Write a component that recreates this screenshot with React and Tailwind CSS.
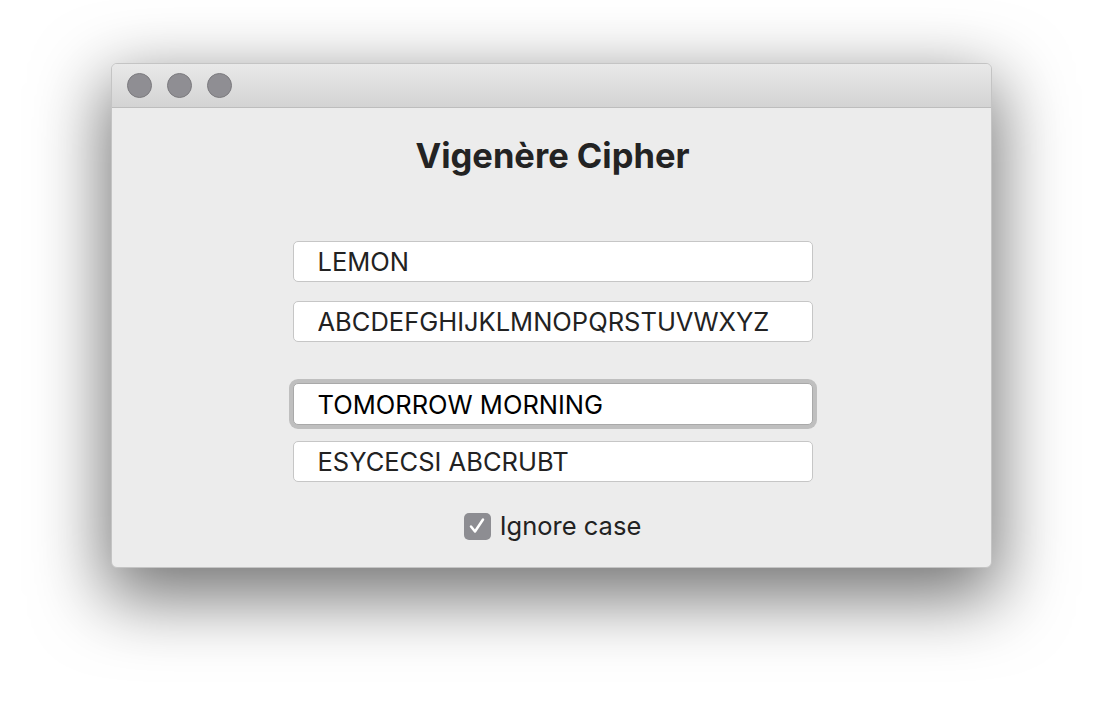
import { useState } from 'react';

const font = { fontFamily: 'Inter, "Liberation Sans", sans-serif' };

function Field({ value, onChange, focused }) {
  return (
    <input
      value={value}
      onChange={onChange}
      className={
        'w-[520px] bg-white rounded-[5px] px-[24px] text-[25.5px] outline-none ' +
        (focused
          ? 'h-[42px] border border-[#a9a9a9] text-black shadow-[0_0_0_4px_#bfbfbf]'
          : 'h-[41px] border border-[#c6c6c6] text-[#222]')
      }
      style={font}
    />
  );
}

export default function App() {
  const [key, setKey] = useState('LEMON');
  const [alphabet, setAlphabet] = useState('ABCDEFGHIJKLMNOPQRSTUVWXYZ');
  const [plain, setPlain] = useState('TOMORROW MORNING');
  const [cipher, setCipher] = useState('ESYCECSI ABCRUBT');
  const [ignoreCase, setIgnoreCase] = useState(true);

  return (
    <div className="w-full h-[728px] bg-white pt-[63px] pl-[111px]" style={font}>
      <div className="w-[881px] h-[505px] rounded-[6px] overflow-hidden bg-[#ececec] border border-[#c4c4c4] shadow-[0_24px_70px_6px_rgba(0,0,0,0.55)] flex flex-col">
        {/* title bar */}
        <div className="h-[44px] shrink-0 flex items-center gap-[15px] pl-[15px] bg-gradient-to-b from-[#e9e9e9] to-[#d3d3d3] border-b border-[#bdbdbd]">
          <div className="w-[25px] h-[25px] rounded-full bg-[#8f8e93] border border-[#7b7a7e]" />
          <div className="w-[25px] h-[25px] rounded-full bg-[#8f8e93] border border-[#7b7a7e]" />
          <div className="w-[25px] h-[25px] rounded-full bg-[#8f8e93] border border-[#7b7a7e]" />
        </div>

        <div className="flex flex-col items-center pt-[28px] pl-[2px]">
          <h1 className="h-[40px] leading-[40px] text-[34.5px] font-bold text-[#232323]">Vigenère Cipher</h1>

          <div className="mt-[65px]">
            <Field value={key} onChange={(e) => setKey(e.target.value)} />
          </div>
          <div className="mt-[19px]">
            <Field value={alphabet} onChange={(e) => setAlphabet(e.target.value)} />
          </div>
          <div className="mt-[41px]">
            <Field value={plain} onChange={(e) => setPlain(e.target.value)} focused />
          </div>
          <div className="mt-[16px]">
            <Field value={cipher} onChange={(e) => setCipher(e.target.value)} />
          </div>

          <label className="mt-[29px] h-[30px] flex items-center gap-[9px] cursor-pointer select-none">
            <span
              onClick={() => setIgnoreCase(!ignoreCase)}
              className="w-[27px] h-[27px] rounded-[5px] bg-[#8d8d92] flex items-center justify-center"
            >
              {ignoreCase && (
                <svg width="18" height="18" viewBox="0 0 18 18" fill="none">
                  <path d="M3 9.5 L7 14.5 L15 2.5" stroke="white" strokeWidth="2.5" strokeLinecap="round" strokeLinejoin="round" />
                </svg>
              )}
            </span>
            <span className="text-[25.5px] text-[#222]">Ignore case</span>
          </label>
        </div>
      </div>
    </div>
  );
}
